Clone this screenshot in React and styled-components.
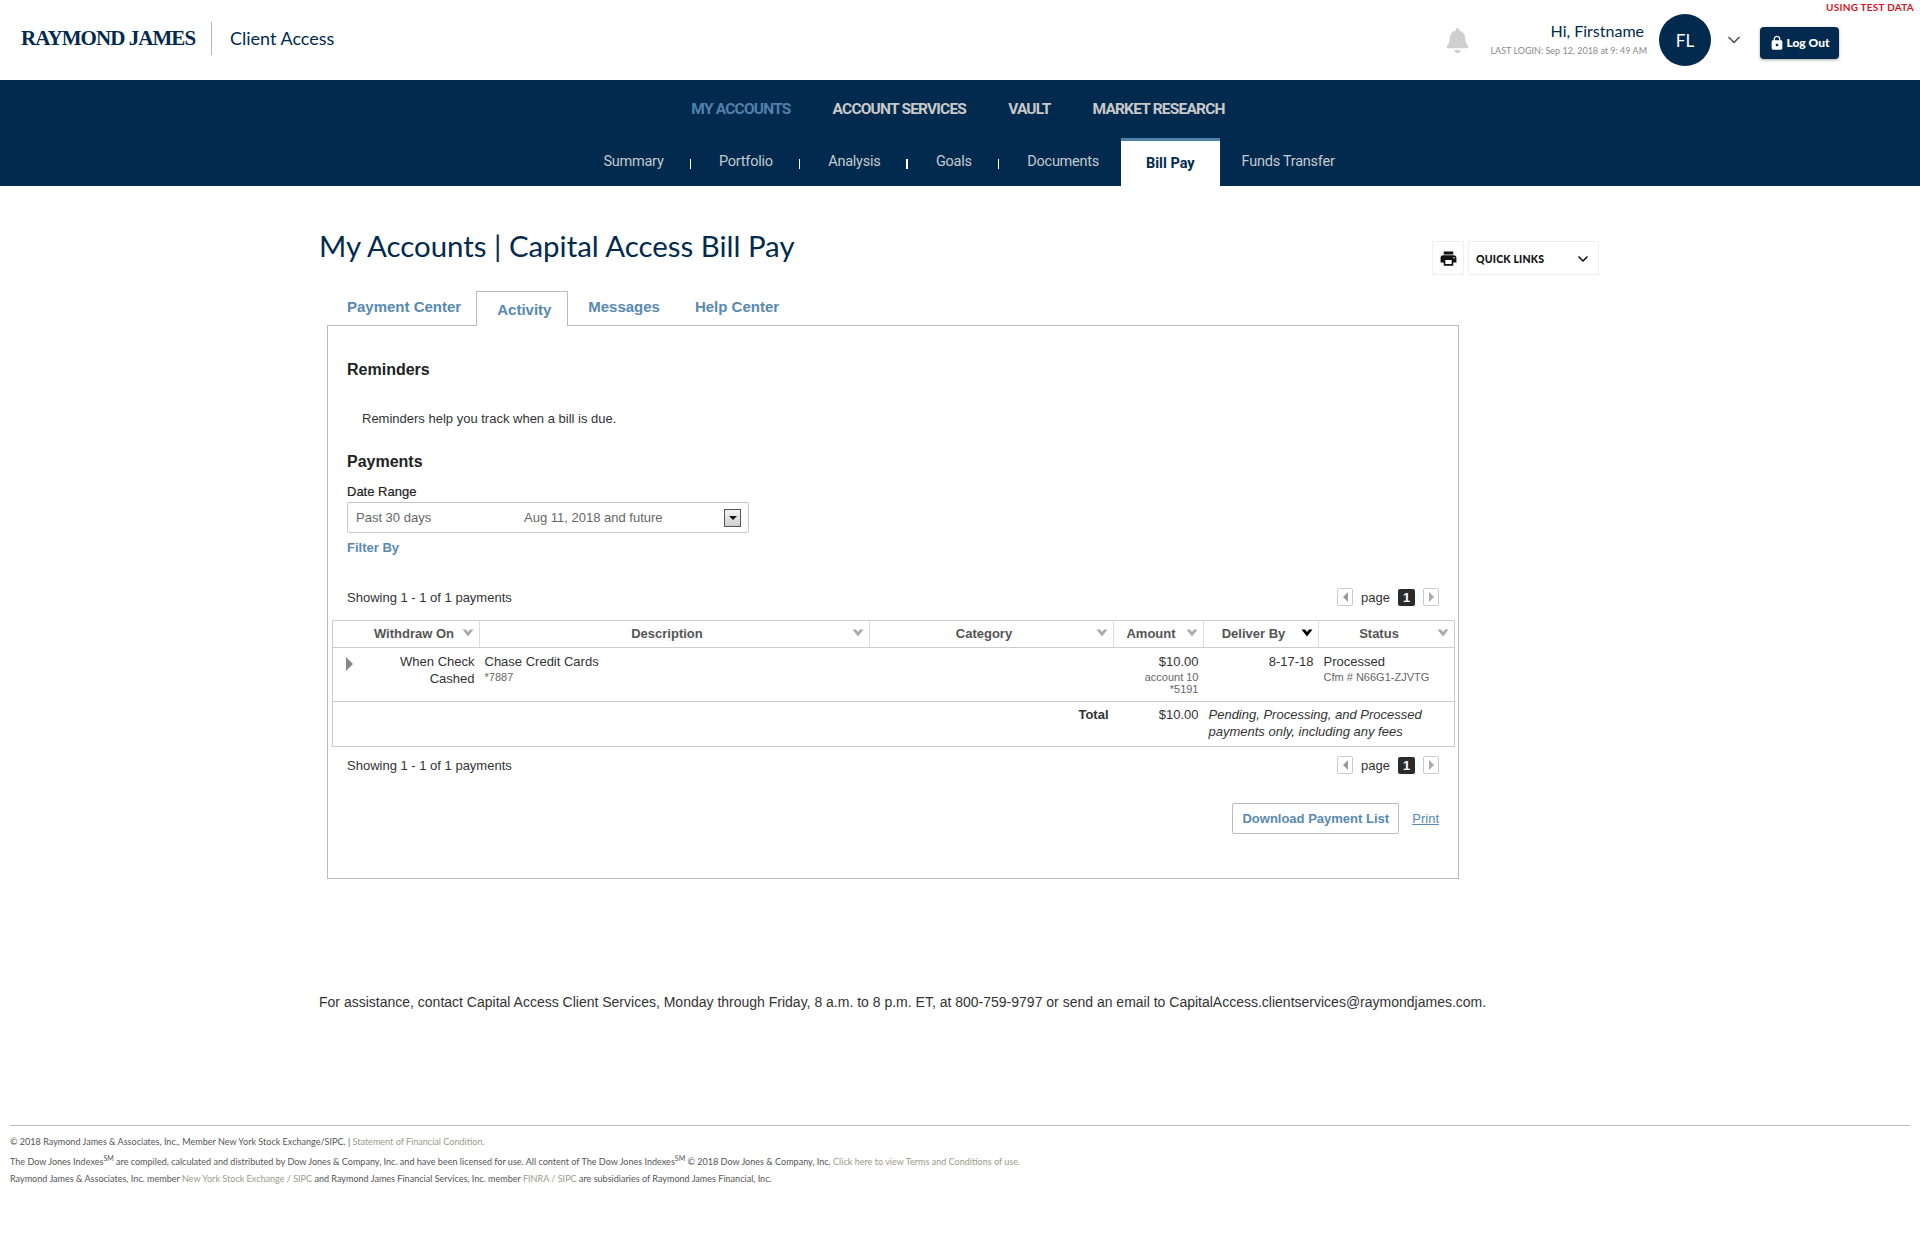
import React from "react";
import styled, { createGlobalStyle } from "styled-components";
import { FaBell } from "react-icons/fa";
import { MdLock, MdPrint } from "react-icons/md";
import { ChevronDown } from "lucide-react";

const NAVY = "#022a4e";
const BLUE = "#5889b0";
const SANS = `"Lato", "Noto Sans", sans-serif`;
const ARIAL = `"Liberation Sans", Arial, sans-serif`;

const Global = createGlobalStyle`
    html, body {
        margin: 0;
        padding: 0;
        background: #fff;
    }
    body {
        font-family: ${ARIAL};
        font-size: 13px;
        color: #333;
    }
    * {
        box-sizing: border-box;
    }
`;

const Page = styled.div`
    min-height: 1246px;
    background: #fff;
`;

const Header = styled.header`
    position: relative;
    height: 80px;
    display: flex;
    align-items: center;
    padding: 0 81px 0 21px;
`;

const TestFlag = styled.div`
    position: absolute;
    top: 1px;
    right: 6px;
    color: #d9121f;
    font-family: ${SANS};
    font-size: 10px;
    font-weight: 700;
    letter-spacing: 0.25px;
`;

const Logo = styled.div`
    font-family: "Liberation Serif", serif;
    font-weight: 700;
    font-size: 21px;
    letter-spacing: -0.95px;
    color: ${NAVY};
    width: 191px;
    height: 33px;
    line-height: 33px;
    margin-bottom: 3px;
    border-right: 1px solid #b5b5b5;
    white-space: nowrap;
`;

const AppName = styled.div`
    font-family: ${SANS};
    font-size: 18px;
    color: ${NAVY};
    margin: 0 0 5px 18px;
    flex: 1;
`;

const Bell = styled(FaBell)`
    color: #cfcfcf;
    font-size: 25px;
    margin: 1px 20px 0 0;
`;

const Greeting = styled.div`
    display: flex;
    flex-direction: column;
    align-items: flex-end;
    margin: 0 12px 3px 0;
    font-family: ${SANS};
`;

const Hello = styled.div`
    font-size: 16px;
    color: ${NAVY};
    line-height: 22px;
    margin-right: 3px;
`;

const LastLogin = styled.div`
    font-size: 9px;
    color: #8a8a8a;
    line-height: 14px;
    margin-top: 2px;
`;

const Avatar = styled.div`
    width: 52px;
    height: 52px;
    border-radius: 50%;
    background: ${NAVY};
    color: #fff;
    font-family: ${SANS};
    font-size: 17px;
    display: flex;
    align-items: center;
    justify-content: center;
`;

const UserCaret = styled(ChevronDown)`
    color: #555;
    width: 20px;
    height: 20px;
    margin: 0 16px 0 13px;
`;

const LogOut = styled.button`
    display: flex;
    align-items: center;
    justify-content: center;
    gap: 1px;
    width: 79px;
    height: 32px;
    border: 0;
    border-radius: 4px;
    background: ${NAVY};
    color: #fff;
    font-family: ${SANS};
    font-size: 12px;
    font-weight: 900;
    box-shadow: 0 1px 3px rgba(0, 0, 0, 0.35);
    margin-top: 5px;
    padding: 0;
`;

const Nav = styled.nav`
    height: 106px;
    background: ${NAVY};
    display: flex;
    flex-direction: column;
    align-items: center;
`;

const TopNav = styled.div`
    display: flex;
    gap: 42px;
    height: 58px;
    padding-top: 19px;
    margin-left: -4px;
`;

const TopLink = styled.a`
    font-family: "Roboto", sans-serif;
    font-size: 15.5px;
    font-weight: 700;
    letter-spacing: -0.8px;
    line-height: 20px;
    color: ${(p) => (p.$active ? "#4f81ab" : "#c9c9c9")};
`;

const SubNav = styled.div`
    display: flex;
    align-items: stretch;
    height: 48px;
    margin-left: 18px;
`;

const SubLink = styled.a`
    display: flex;
    align-items: center;
    padding-bottom: 2px;
    font-family: "Roboto", sans-serif;
    font-size: 14.5px;
    letter-spacing: -0.25px;
    color: #c4c9ce;
`;

const Sep = styled.span`
    width: 1.5px;
    height: 10px;
    background: #fff;
    align-self: center;
    margin: 3px 28px 0 26px;
`;

const ActiveSub = styled(SubLink)`
    background: #fff;
    border-top: 3px solid #4f81ab;
    color: ${NAVY};
    font-weight: 700;
    letter-spacing: 0;
    padding: 0 25px 0;
    margin: 0 22px;
`;

const Main = styled.main`
    width: 1282px;
    margin: 0 auto;
    padding-top: 40px;
`;

const TitleRow = styled.div`
    display: flex;
    align-items: flex-start;
    height: 40px;
`;

const Title = styled.h1`
    margin: 0;
    flex: 1;
    font-family: ${SANS};
    font-size: 29.4px;
    font-weight: 400;
    line-height: 40px;
    color: ${NAVY};
`;

const BoxButton = styled.div`
    height: 34px;
    margin-top: 15px;
    display: flex;
    align-items: center;
    justify-content: center;
    border: 1px solid #eee;
    color: #111;
`;

const PrintBox = styled(BoxButton)`
    width: 32px;
    margin-right: 4px;
    font-size: 19px;
`;

const QuickLinks = styled(BoxButton)`
    width: 131px;
    justify-content: space-between;
    padding: 1px 7px 0;
    font-family: ${SANS};
    font-size: 10.5px;
    font-weight: 900;
    letter-spacing: 0.2px;
    margin-right: 2px;
`;

const TabRow = styled.div`
    display: flex;
    margin: 25px 0 -1px 8px;
    height: 35px;
    position: relative;
`;

const Tab = styled.a`
    font-size: 15px;
    font-weight: 700;
    color: ${BLUE};
    line-height: 17px;
    padding: ${(p) => (p.$active ? "9px 0 0 20px" : "7px 0 0")};
    margin: ${(p) => p.$gap || "0"};
    ${(p) =>
        p.$active &&
        `
        background: #fff;
        border: 1px solid #bbb;
        border-bottom: 0;
        height: 35px;
        width: 92px;
    `}
`;

const Panel = styled.section`
    width: 1132px;
    margin-left: 8px;
    border: 1px solid #bbb;
    padding: 34px 19px 44px;
`;

const Heading = styled.h2`
    margin: ${(p) => p.$margin || "0"};
    font-size: 16px;
    font-weight: 700;
    line-height: 20px;
    color: #222;
`;

const Hint = styled.p`
    margin: 31px 0 0 15px;
    line-height: 16px;
    color: #333;
`;

const FieldLabel = styled.div`
    margin-top: 12px;
    line-height: 16px;
    color: #222;
    -webkit-text-stroke: 0.2px #222;
`;

const Select = styled.div`
    margin-top: 2px;
    width: 402px;
    height: 31px;
    border: 1px solid #c8c8c8;
    border-radius: 2px;
    display: flex;
    align-items: center;
    padding: 0 7px 0 8px;
    color: #666;
`;

const SelectRange = styled.span`
    width: 168px;
`;

const SelectDate = styled.span`
    flex: 1;
`;

const SelectArrow = styled.span`
    width: 17px;
    height: 18px;
    border: 1px solid #555;
    background: linear-gradient(#f4f4f4, #cfcfcf);
    display: flex;
    align-items: center;
    justify-content: center;
    &:after {
        content: "";
        border: 4px solid transparent;
        border-top: 4px solid #111;
        border-bottom: 0;
    }
`;

const FilterBy = styled.a`
    display: block;
    margin-top: 7px;
    line-height: 16px;
    font-weight: 700;
    color: ${BLUE};
`;

const PagerRow = styled.div`
    display: flex;
    align-items: center;
    justify-content: space-between;
    height: 20px;
    margin-top: ${(p) => p.$top}px;
    color: #333;
`;

const Pager = styled.div`
    display: flex;
    align-items: center;
`;

const PageArrow = styled.span`
    width: 16px;
    height: 18px;
    border: 1px solid #ccc;
    border-radius: 2px;
    display: flex;
    align-items: center;
    justify-content: center;
    &:after {
        content: "";
        border: 5px solid transparent;
        border-left: ${(p) => (p.$next ? "5px solid #aaa" : "0")};
        border-right: ${(p) => (p.$next ? "0" : "5px solid #999")};
    }
`;

const PageWord = styled.span`
    margin: 0 8px;
`;

const PageNumber = styled.span`
    width: 17px;
    height: 17px;
    margin-right: 8px;
    border-radius: 2px;
    background: #2b2b2b;
    color: #fff;
    font-weight: 700;
    text-align: center;
    line-height: 17px;
`;

const Table = styled.table`
    width: 1122px;
    margin: 13px 0 8px -15px;
    border-collapse: collapse;
    table-layout: fixed;
    border: 1px solid #ccc;
`;

const Th = styled.th`
    height: 27px;
    padding: 0 0 2px;
    border-bottom: 1px solid #ccc;
    border-right: 1px solid #ddd;
    font-weight: 700;
    color: #555;
    &:last-child {
        border-right: 0;
    }
`;

const ThInner = styled.div`
    display: flex;
    align-items: center;
    padding: 0 3px 0 2px;
`;

const ThLabel = styled.span`
    flex: 1;
    text-align: ${(p) => p.$align || "center"};
    padding-right: ${(p) => p.$pad || 0}px;
`;

const Td = styled.td`
    padding: ${(p) => p.$top || 4}px 5px 5px;
    vertical-align: top;
    line-height: 17px;
    color: #333;
    text-align: ${(p) => p.$align || "left"};
    ${(p) => p.$bold && "font-weight: 700;"}
    ${(p) => p.$italic && "font-style: italic;"}
`;

const DataRow = styled.tr`
    height: 54px;
    border-bottom: 1px solid #ccc;
`;

const TotalRow = styled.tr`
    height: 45px;
`;

const WithdrawCell = styled.div`
    display: flex;
`;

const Expand = styled.span`
    flex: none;
    margin: 4px 0 0 8px;
    width: 0;
    height: 0;
    border-top: 7px solid transparent;
    border-bottom: 7px solid transparent;
    border-left: 7px solid #888;
`;

const WithdrawText = styled.span`
    flex: 1;
    text-align: right;
    padding-left: 30px;
`;

const Small = styled.div`
    font-size: 11px;
    line-height: 12px;
    color: #666;
    &:first-of-type {
        margin-top: 1px;
    }
`;

const Actions = styled.div`
    display: flex;
    justify-content: flex-end;
    align-items: center;
    gap: 13px;
    margin-top: 28px;
`;

const Download = styled.button`
    width: 167px;
    height: 31px;
    padding: 0;
    background: #fff;
    border: 1px solid #bbb;
    border-radius: 2px;
    font-family: ${ARIAL};
    font-size: 13px;
    font-weight: 700;
    color: ${BLUE};
`;

const PrintLink = styled.a`
    color: ${BLUE};
    text-decoration: underline;
`;

const Assistance = styled.p`
    margin: 115px 0 0;
    font-size: 14px;
    line-height: 16px;
    color: #333;
`;

const Footer = styled.footer`
    margin: 115px 10px 0;
    padding-top: 10px;
    border-top: 1px solid #bbb;
    font-family: ${SANS};
    font-size: 9.05px;
    color: #555;
`;

const FooterLine = styled.div`
    line-height: 12px;
    margin-bottom: ${(p) => p.$gap || 0}px;
    sup {
        font-size: 7px;
        line-height: 0;
    }
`;

const FooterLink = styled.a`
    color: #9a9a88;
`;

const SortCaret = ({ dark }) => (
    <svg width="12" height="8" viewBox="0 0 12 8" style={{ flex: "none", marginRight: 2 }}>
        <path d="M0.5 0.5 L4 0.5 L6 3 L8 0.5 L11.5 0.5 L6 7.5 Z" fill={dark ? "#000" : "#aaa"} />
    </svg>
);

function PagerBar() {
    return (
        <Pager>
            <PageArrow />
            <PageWord>page</PageWord>
            <PageNumber>1</PageNumber>
            <PageArrow $next />
        </Pager>
    );
}

const COLUMNS = [147, 390, 244, 90, 115, 136];

export default function App() {
    return (
        <Page>
            <Global />
            <Header>
                <TestFlag>USING TEST DATA</TestFlag>
                <Logo>RAYMOND JAMES</Logo>
                <AppName>Client Access</AppName>
                <Bell />
                <Greeting>
                    <Hello>Hi, Firstname</Hello>
                    <LastLogin>LAST LOGIN: Sep 12, 2018 at 9: 49 AM</LastLogin>
                </Greeting>
                <Avatar>FL</Avatar>
                <UserCaret />
                <LogOut>
                    <MdLock size={16} /> Log Out
                </LogOut>
            </Header>
            <Nav>
                <TopNav>
                    <TopLink $active>MY ACCOUNTS</TopLink>
                    <TopLink>ACCOUNT SERVICES</TopLink>
                    <TopLink>VAULT</TopLink>
                    <TopLink>MARKET RESEARCH</TopLink>
                </TopNav>
                <SubNav>
                    <SubLink>Summary</SubLink>
                    <Sep />
                    <SubLink>Portfolio</SubLink>
                    <Sep />
                    <SubLink>Analysis</SubLink>
                    <Sep />
                    <SubLink>Goals</SubLink>
                    <Sep />
                    <SubLink>Documents</SubLink>
                    <ActiveSub>Bill Pay</ActiveSub>
                    <SubLink>Funds Transfer</SubLink>
                </SubNav>
            </Nav>
            <Main>
                <TitleRow>
                    <Title>My Accounts | Capital Access Bill Pay</Title>
                    <PrintBox>
                        <MdPrint />
                    </PrintBox>
                    <QuickLinks>
                        QUICK LINKS
                        <ChevronDown size={16} strokeWidth={2.5} />
                    </QuickLinks>
                </TitleRow>
                <TabRow>
                    <Tab $gap="0 15px 0 20px">Payment Center</Tab>
                    <Tab $active>Activity</Tab>
                    <Tab $gap="0 35px 0 20px">Messages</Tab>
                    <Tab>Help Center</Tab>
                </TabRow>
                <Panel>
                    <Heading>Reminders</Heading>
                    <Hint>Reminders help you track when a bill is due.</Hint>
                    <Heading $margin="25px 0 0">Payments</Heading>
                    <FieldLabel>Date Range</FieldLabel>
                    <Select>
                        <SelectRange>Past 30 days</SelectRange>
                        <SelectDate>Aug 11, 2018 and future</SelectDate>
                        <SelectArrow />
                    </Select>
                    <FilterBy>Filter By</FilterBy>
                    <PagerRow $top={31}>
                        <span>Showing 1 - 1 of 1 payments</span>
                        <PagerBar />
                    </PagerRow>
                    <Table>
                        <colgroup>
                            {COLUMNS.map((w, i) => (
                                <col key={i} width={w} />
                            ))}
                        </colgroup>
                        <thead>
                            <tr>
                                <Th>
                                    <ThInner>
                                        <ThLabel $align="right" $pad={8}>Withdraw On</ThLabel>
                                        <SortCaret />
                                    </ThInner>
                                </Th>
                                <Th>
                                    <ThInner>
                                        <ThLabel>Description</ThLabel>
                                        <SortCaret />
                                    </ThInner>
                                </Th>
                                <Th>
                                    <ThInner>
                                        <ThLabel>Category</ThLabel>
                                        <SortCaret />
                                    </ThInner>
                                </Th>
                                <Th>
                                    <ThInner>
                                        <ThLabel>Amount</ThLabel>
                                        <SortCaret />
                                    </ThInner>
                                </Th>
                                <Th>
                                    <ThInner>
                                        <ThLabel>Deliver By</ThLabel>
                                        <SortCaret dark />
                                    </ThInner>
                                </Th>
                                <Th>
                                    <ThInner>
                                        <ThLabel>Status</ThLabel>
                                        <SortCaret />
                                    </ThInner>
                                </Th>
                            </tr>
                        </thead>
                        <tbody>
                            <DataRow>
                                <Td $top={5}>
                                    <WithdrawCell>
                                        <Expand />
                                        <WithdrawText>When Check Cashed</WithdrawText>
                                    </WithdrawCell>
                                </Td>
                                <Td $top={5}>
                                    Chase Credit Cards
                                    <Small>*7887</Small>
                                </Td>
                                <Td />
                                <Td $top={5} $align="right">
                                    $10.00
                                    <Small>account 10</Small>
                                    <Small>*5191</Small>
                                </Td>
                                <Td $top={5} $align="right">8-17-18</Td>
                                <Td $top={5}>
                                    Processed
                                    <Small>Cfm # N66G1-ZJVTG</Small>
                                </Td>
                            </DataRow>
                            <TotalRow>
                                <Td colSpan={3} $align="right" $bold>Total</Td>
                                <Td $align="right">$10.00</Td>
                                <Td colSpan={2} $italic>Pending, Processing, and Processed payments only, including any fees</Td>
                            </TotalRow>
                        </tbody>
                    </Table>
                    <PagerRow $top={0}>
                        <span>Showing 1 - 1 of 1 payments</span>
                        <PagerBar />
                    </PagerRow>
                    <Actions>
                        <Download>Download Payment List</Download>
                        <PrintLink>Print</PrintLink>
                    </Actions>
                </Panel>
                <Assistance>
                    For assistance, contact Capital Access Client Services, Monday through Friday, 8 a.m. to 8 p.m. ET, at 800-759-9797 or send an email to CapitalAccess.clientservices@raymondjames.com.
                </Assistance>
            </Main>
            <Footer>
                <FooterLine $gap={8}>
                    © 2018 Raymond James &amp; Associates, Inc., Member New York Stock Exchange/SIPC. | <FooterLink>Statement of Financial Condition.</FooterLink>
                </FooterLine>
                <FooterLine $gap={5}>
                    The Dow Jones Indexes<sup>SM</sup> are compiled, calculated and distributed by Dow Jones &amp; Company, Inc. and have been licensed for use. All content of The Dow Jones Indexes<sup>SM</sup> © 2018 Dow Jones &amp; Company, Inc. <FooterLink>Click here to view Terms and Conditions of use.</FooterLink>
                </FooterLine>
                <FooterLine>
                    Raymond James &amp; Associates, Inc. member <FooterLink>New York Stock Exchange / SIPC</FooterLink> and Raymond James Financial Services, Inc. member <FooterLink>FINRA / SIPC</FooterLink> are subsidiaries of Raymond James Financial, Inc.
                </FooterLine>
            </Footer>
        </Page>
    );
}
